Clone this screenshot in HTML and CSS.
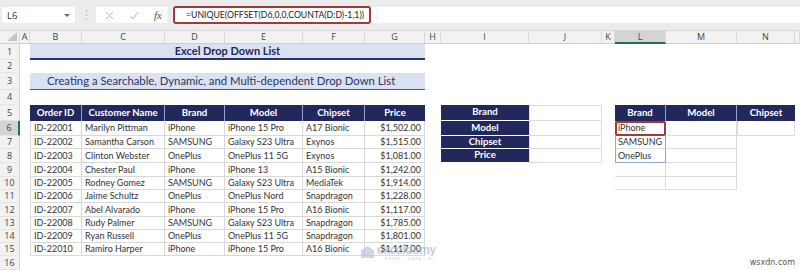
FILE: index.html
```html
<!DOCTYPE html>
<html>
<head>
  <title>Excel Drop Down List</title>
  <link rel="stylesheet" href="styles.css">
</head>
<body>
<div class="toolbar">
  <div class="namebox"><span>L6</span><span class="caret"></span></div>
  <svg class="grip" width="3" height="12" viewBox="0 0 3 12"><circle cx="1.5" cy="2" r="0.8"/><circle cx="1.5" cy="6" r="0.8"/><circle cx="1.5" cy="10" r="0.8"/></svg>
  <div class="fbtns">
    <svg width="9" height="9" viewBox="0 0 9 9"><path d="M1 1L8 8M8 1L1 8"/></svg>
    <svg width="10" height="9" viewBox="0 0 10 9"><path d="M1 5L4 8L9 1"/></svg>
    <span class="fx">fx</span>
  </div>
  <div class="formula"><span class="formula-text">=UNIQUE(OFFSET(D6,0,0,COUNTA(D:D)-1,1))</span></div>
</div>

<div class="sheet">
  <!-- column headers -->
  <div class="corner"><span class="tri"></span></div>
  <div class="colhead">A</div>
  <div class="colhead">B</div>
  <div class="colhead">C</div>
  <div class="colhead">D</div>
  <div class="colhead">E</div>
  <div class="colhead">F</div>
  <div class="colhead">G</div>
  <div class="colhead">H</div>
  <div class="colhead">I</div>
  <div class="colhead">J</div>
  <div class="colhead">K</div>
  <div class="colhead active">L</div>
  <div class="colhead">M</div>
  <div class="colhead">N</div>
  <div class="colhead"></div>

  <!-- row numbers -->
  <div class="rownum">1</div>
  <div class="rownum">2</div>
  <div class="rownum">3</div>
  <div class="rownum">4</div>
  <div class="rownum">5</div>
  <div class="rownum active">6</div>
  <div class="rownum">7</div>
  <div class="rownum">8</div>
  <div class="rownum">9</div>
  <div class="rownum">10</div>
  <div class="rownum">11</div>
  <div class="rownum">12</div>
  <div class="rownum">13</div>
  <div class="rownum">14</div>
  <div class="rownum">15</div>
  <div class="rownum">16</div>

  <div class="title-main">Excel Drop Down List</div>
  <div class="title-sub">Creating a Searchable, Dynamic, and Multi-dependent Drop Down List</div>

  <!-- source table -->
  <div class="order head r5"><div>Order ID</div><div>Customer Name</div><div>Brand</div><div>Model</div><div>Chipset</div><div>Price</div></div>
  <div class="order r6"><div>ID-22001</div><div>Marilyn Pittman</div><div>iPhone</div><div>iPhone 15 Pro</div><div>A17 Bionic</div><div>$1,502.00</div></div>
  <div class="order r7"><div>ID-22002</div><div>Samantha Carson</div><div>SAMSUNG</div><div>Galaxy S23 Ultra</div><div>Exynos</div><div>$1,515.00</div></div>
  <div class="order r8"><div>ID-22003</div><div>Clinton Webster</div><div>OnePlus</div><div>OnePlus 11 5G</div><div>Exynos</div><div>$1,081.00</div></div>
  <div class="order r9"><div>ID-22004</div><div>Chester Paul</div><div>iPhone</div><div>iPhone 13</div><div>A15 Bionic</div><div>$1,242.00</div></div>
  <div class="order r10"><div>ID-22005</div><div>Rodney Gomez</div><div>SAMSUNG</div><div>Galaxy S23 Ultra</div><div>MediaTek</div><div>$1,914.00</div></div>
  <div class="order r11"><div>ID-22006</div><div>Jaime Schultz</div><div>OnePlus</div><div>OnePlus Nord</div><div>Snapdragon</div><div>$1,228.00</div></div>
  <div class="order r12"><div>ID-22007</div><div>Abel Alvarado</div><div>iPhone</div><div>iPhone 15 Pro</div><div>A16 Bionic</div><div>$1,117.00</div></div>
  <div class="order r13"><div>ID-22008</div><div>Rudy Palmer</div><div>SAMSUNG</div><div>Galaxy S23 Ultra</div><div>Snapdragon</div><div>$1,785.00</div></div>
  <div class="order r14"><div>ID-22009</div><div>Ryan Russell</div><div>OnePlus</div><div>OnePlus 11 5G</div><div>Snapdragon</div><div>$1,801.00</div></div>
  <div class="order r15"><div>ID-22010</div><div>Ramiro Harper</div><div>iPhone</div><div>iPhone 15 Pro</div><div>A16 Bionic</div><div>$1,117.00</div></div>

  <!-- lookup labels -->
  <div class="label r5">Brand</div>
  <div class="label r6">Model</div>
  <div class="label r7">Chipset</div>
  <div class="label r8">Price</div>
  <div class="pick first r5"></div>
  <div class="pick r6"></div>
  <div class="pick r7"></div>
  <div class="pick r8"></div>

  <!-- dependent lists -->
  <div class="lhead cL r5">Brand</div>
  <div class="lhead cM r5">Model</div>
  <div class="lhead cN r5">Chipset</div>
  <div class="spill selected r6">iPhone</div>
  <div class="spill r7">SAMSUNG</div>
  <div class="spill last r8">OnePlus</div>
  <div class="empty cL r9"></div>
  <div class="empty cL r10"></div>
  <div class="empty cM r6"></div>
  <div class="empty cM r7"></div>
  <div class="empty cM r8"></div>
  <div class="empty cM r9"></div>
  <div class="empty cM r10"></div>
  <div class="empty cN r6"></div>

  <div class="watermark"><span class="mark"></span><span class="brand">exceldemy</span><span class="tag">EXCEL · DATA · BI</span></div>
  <div class="source">wsxdn.com</div>
</div>
</body>
</html>
```

FILE: styles.css
```css
* {
  box-sizing: border-box;
}

body {
  margin: 0;
  width: 800px;
  height: 270px;
  overflow: hidden;
  background-color: #fff;
  font-family: "Lato", "Open Sans", sans-serif;
  color: #333;
}

/* formula bar */
.toolbar {
  height: 31px;
  display: flex;
  align-items: flex-start;
  padding-top: 7px;
  background-color: #ececec;
  border-bottom: 1px solid #d8d8d8;
}

.namebox {
  width: 73px;
  height: 16px;
  margin-left: 2px;
  display: flex;
  align-items: center;
  justify-content: space-between;
  padding: 0 5px;
  background-color: #fff;
  font-family: "Open Sans", sans-serif;
  font-size: 9.5px;
  color: #333;
}

.caret {
  width: 0;
  height: 0;
  border-left: 3px solid transparent;
  border-right: 3px solid transparent;
  border-top: 3px solid #666;
}

.grip {
  margin: 2px 8px 0 10px;
  fill: #b0b0b0;
}

.fbtns {
  width: 72px;
  height: 16px;
  display: flex;
  align-items: center;
  gap: 15px;
  padding-left: 9px;
  background-color: #fff;
}

.fbtns svg {
  fill: none;
  stroke: #b8b8b8;
  stroke-width: 1;
}

.fx {
  font-family: "Liberation Serif", serif;
  font-style: italic;
  font-size: 11px;
  color: #555;
}

.formula {
  flex: 1;
  height: 16px;
  margin-left: 5px;
  background-color: #fff;
  display: flex;
}

.formula-text {
  width: 198px;
  height: 18px;
  margin-top: -1px;
  padding-left: 11px;
  border: 2px solid #a13a38;
  border-radius: 3px;
  font-family: "Lato", sans-serif;
  font-size: 8.7px;
  line-height: 14px;
  white-space: nowrap;
  color: #222;
}

/* grid */
.sheet {
  position: relative;
  display: grid;
  grid-template-columns: 20px 10px 52px 83px 60px 78px 62px 60px 16px 88px 73px 13px 51px 71px 58px 1fr;
  grid-template-rows: 13px 16px 13px 17px 15px 16px 15px 13px 14px 14px 13px 13px 14px 13px 13px 13px 14px;
  font-size: 9px;
  line-height: 1.1;
}

.sheet div {
  white-space: nowrap;
}

.corner,
.colhead {
  grid-row: 1;
  background-color: #f2f2f2;
  border-right: 1px solid #dadada;
  border-bottom: 1px solid #cfcfcf;
}

.corner {
  position: relative;
}

.tri {
  position: absolute;
  right: 2px;
  bottom: 2px;
  width: 0;
  height: 0;
  border-left: 10px solid transparent;
  border-bottom: 9px solid #c6c6c6;
}

.colhead {
  display: flex;
  align-items: center;
  justify-content: center;
  font-family: "Open Sans", sans-serif;
  font-size: 9px;
  color: #444;
}

.rownum {
  grid-column: 1;
  display: flex;
  align-items: center;
  justify-content: center;
  background-color: #f2f2f2;
  border-right: 1px solid #cfcfcf;
  border-bottom: 1px solid #e4e4e4;
  font-family: "Open Sans", sans-serif;
  font-size: 9px;
  color: #444;
}

.colhead.active {
  background-color: #d4d4d4;
  border-bottom: 2px solid #217346;
}

.rownum.active {
  background-color: #d4d4d4;
  border-right: 2px solid #217346;
}

/* titles */
.title-main,
.title-sub {
  grid-column: 3 / 9;
  display: flex;
  align-items: center;
  background-color: #d9e1f2;
  color: #1f2858;
}

.title-main {
  grid-row: 2;
  justify-content: center;
  font-weight: bold;
  font-size: 11px;
  border-bottom: 2px solid #27336b;
}

.title-sub {
  grid-row: 4;
  padding-left: 17px;
  font-size: 11.3px;
  color: #2c365e;
  border-bottom: 1px solid #4a5785;
}

/* rows */
.r5 { grid-row: 6; }
.r6 { grid-row: 7; }
.r7 { grid-row: 8; }
.r8 { grid-row: 9; }
.r9 { grid-row: 10; }
.r10 { grid-row: 11; }
.r11 { grid-row: 12; }
.r12 { grid-row: 13; }
.r13 { grid-row: 14; }
.r14 { grid-row: 15; }
.r15 { grid-row: 16; }

.r5 > div { grid-row: 6; }
.r6 > div { grid-row: 7; }
.r7 > div { grid-row: 8; }
.r8 > div { grid-row: 9; }
.r9 > div { grid-row: 10; }
.r10 > div { grid-row: 11; }
.r11 > div { grid-row: 12; }
.r12 > div { grid-row: 13; }
.r13 > div { grid-row: 14; }
.r14 > div { grid-row: 15; }
.r15 > div { grid-row: 16; }

.cL { grid-column: 13; }
.cM { grid-column: 14; }
.cN { grid-column: 15; }

/* source table */
.order {
  display: contents;
}

.order > div {
  display: flex;
  align-items: center;
  padding: 0 3px;
  border-right: 1px solid #d9d9d9;
  border-bottom: 1px solid #d9d9d9;
}

.order > div:nth-child(1) { grid-column: 3; border-left: 1px solid #d9d9d9; }
.order > div:nth-child(2) { grid-column: 4; }
.order > div:nth-child(3) { grid-column: 5; }
.order > div:nth-child(4) { grid-column: 6; }
.order > div:nth-child(5) { grid-column: 7; }
.order > div:nth-child(6) { grid-column: 8; justify-content: flex-end; }

.order.head > div,
.label,
.lhead {
  display: flex;
  align-items: center;
  justify-content: center;
  background-color: #23285c;
  color: #fff;
  font-weight: bold;
  font-size: 9.6px;
}

.order.head > div {
  border-right: 1px solid #9aa0c0;
  border-bottom: none;
}

.order.head > div:nth-child(1) { border-left: none; }
.order.head > div:nth-child(6) { border-right: none; }

/* lookup */
.label {
  grid-column: 10;
  border-bottom: 1px solid #fff;
}

.pick {
  grid-column: 11;
  border: 1px solid #dcdcdc;
  border-top: none;
}

.pick.first {
  border-top: 1px solid #dcdcdc;
}

/* dependent lists */
.lhead {
  border-right: 1px solid #9aa0c0;
}

.lhead.cN {
  border-right: none;
}

.spill {
  grid-column: 13;
  display: flex;
  align-items: center;
  padding: 0 2px;
  border-left: 1px solid #8aa5d6;
  border-right: 1px solid #8aa5d6;
  border-bottom: 1px solid #e4e4e4;
}

.spill.last {
  border-bottom: 1px solid #8aa5d6;
}

.spill.selected {
  outline: 2px solid #a13a38;
  outline-offset: -2px;
  border-radius: 2px;
}

.empty {
  border-right: 1px solid #dcdcdc;
  border-bottom: 1px solid #dcdcdc;
}

.empty.cN {
  border-left: 1px solid #dcdcdc;
}

/* watermarks */
.watermark {
  position: absolute;
  left: 361px;
  top: 213px;
  width: 90px;
  height: 20px;
  opacity: 0.65;
  color: #9fb1d0;
}

.mark {
  position: absolute;
  left: 0;
  top: 2px;
  width: 13px;
  height: 12px;
  background-color: #b3c2dd;
  clip-path: polygon(50% 0, 100% 35%, 100% 100%, 0 100%, 0 35%);
}

.brand {
  position: absolute;
  left: 16px;
  top: -1px;
  font-size: 12.5px;
  font-weight: bold;
}

.tag {
  position: absolute;
  left: 24px;
  top: 13px;
  font-size: 4px;
  letter-spacing: 1px;
}

.source {
  position: absolute;
  right: 5px;
  bottom: 2px;
  font-family: "DejaVu Sans", sans-serif;
  font-size: 8px;
  color: #555;
}
```
